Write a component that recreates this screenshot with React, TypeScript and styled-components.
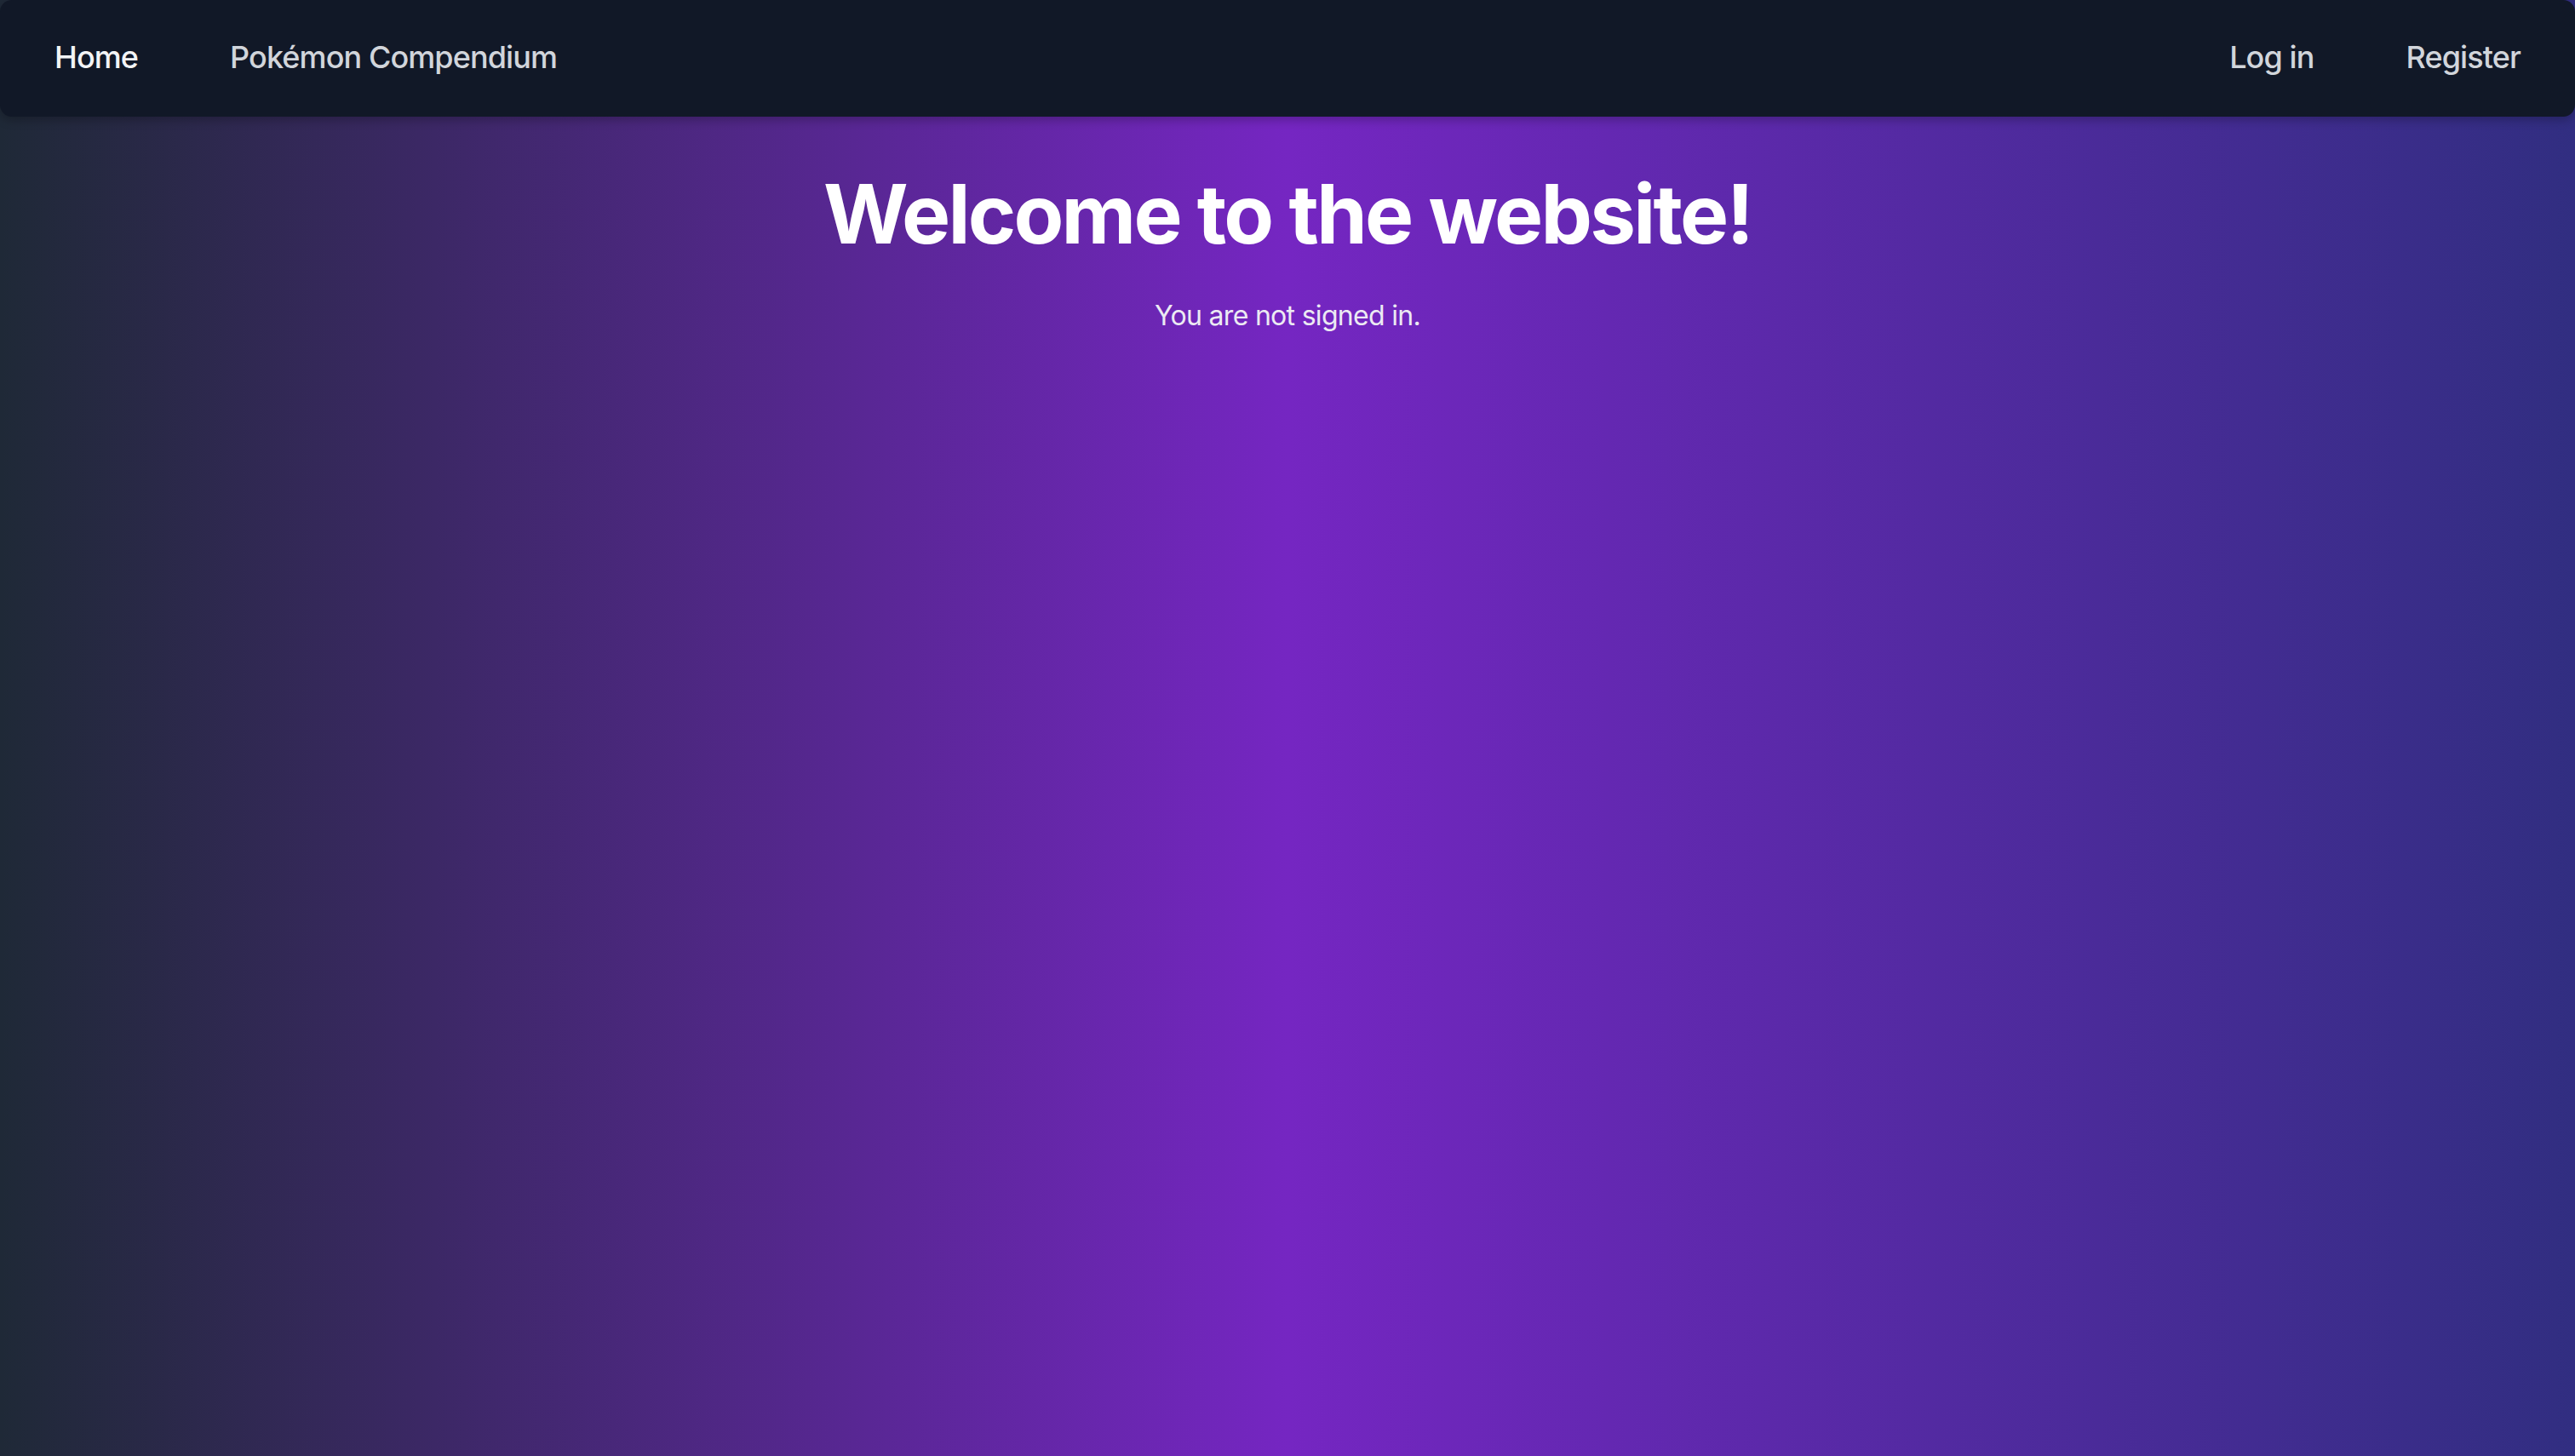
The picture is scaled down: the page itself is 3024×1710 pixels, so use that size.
import React from "react";
import styled, { createGlobalStyle } from "styled-components";

const Global = createGlobalStyle`
  html, body { margin: 0; padding: 0; height: 100%; }
  body {
    font-family: Inter, "Noto Sans", "Liberation Sans", sans-serif;
    background: linear-gradient(to right, #1f2937 0%, #7526c2 50%, #312e81 100%);
    min-height: 100vh;
  }
  #root { min-height: 100vh; }
`;

const Page = styled.div`
  min-height: 100vh;
  display: flex;
  flex-direction: column;
`;

const NavBar = styled.nav`
  height: 137px;
  box-sizing: border-box;
  background: #111827;
  border-radius: 14px;
  box-shadow: 0 4px 12px rgba(0, 0, 0, 0.25);
  display: flex;
  align-items: center;
  justify-content: space-between;
  padding: 0 64px 4px;
`;

const NavGroup = styled.div`
  display: flex;
  align-items: center;
  gap: 108px;
`;

const NavLink = styled.a<{ $bright?: boolean }>`
  font-size: 36px;
  font-weight: 500;
  color: ${(p) => (p.$bright ? "#f3f4f6" : "#d1d5db")};
  text-decoration: none;
  letter-spacing: -0.9px;
`;

const Main = styled.main`
  display: flex;
  flex-direction: column;
  align-items: center;
  padding-top: 66px;
`;

const Title = styled.h1`
  margin: 0;
  font-size: 96px;
  line-height: 1;
  font-weight: 700;
  color: #ffffff;
  letter-spacing: -2.75px;
`;

const Subtitle = styled.p`
  margin: 48px 0 0;
  font-size: 32px;
  line-height: 48px;
  color: #eceaf3;
  letter-spacing: -0.7px;
`;

export default function App() {
  return (
    <Page>
      <Global />
      <NavBar>
        <NavGroup>
          <NavLink href="#" $bright>Home</NavLink>
          <NavLink href="#">Pokémon Compendium</NavLink>
        </NavGroup>
        <NavGroup>
          <NavLink href="#">Log in</NavLink>
          <NavLink href="#">Register</NavLink>
        </NavGroup>
      </NavBar>
      <Main>
        <Title>Welcome to the website!</Title>
        <Subtitle>You are not signed in.</Subtitle>
      </Main>
    </Page>
  );
}
